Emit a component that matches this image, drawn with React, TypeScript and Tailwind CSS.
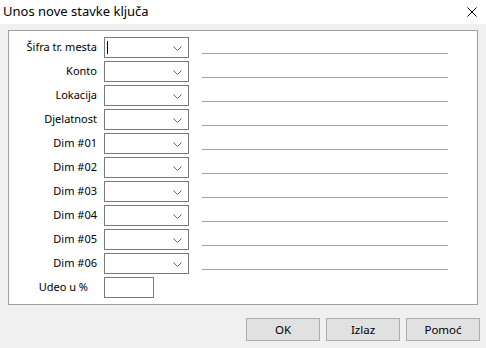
import React from 'react';

const rows = ['Šifra tr. mesta', 'Konto', 'Lokacija', 'Djelatnost', 'Dim #01', 'Dim #02', 'Dim #03', 'Dim #04', 'Dim #05', 'Dim #06'];

function Chevron() {
  return (
    <svg width="9" height="5" viewBox="0 0 9 5" fill="none" className="absolute right-[6px] top-[8px]">
      <path d="M0.5 0.5L4.5 4.5L8.5 0.5" stroke="#606060" strokeWidth="1" />
    </svg>
  );
}

export default function App() {
  return (
    <div className="w-[486px] h-[348px] bg-[#f0f0f0] flex flex-col text-[11px] text-black" style={{ fontFamily: '"Noto Sans", "Liberation Sans", sans-serif' }}>
      {/* Title bar */}
      <div className="h-[24px] bg-white flex items-center justify-between pl-[3px] pr-[9px] shrink-0">
        <span className="text-[13px]">Unos nove stavke ključa</span>
        <svg width="10" height="10" viewBox="0 0 10 10" fill="none">
          <path d="M0.5 0.5L9.5 9.5M9.5 0.5L0.5 9.5" stroke="#000" strokeWidth="1" />
        </svg>
      </div>

      {/* Panel */}
      <div className="mt-[6px] mx-[8px] h-[275px] bg-white border border-[#a0a0a0] flex flex-col gap-[3px] pt-[6px]">
        {rows.map((label, i) => (
          <div key={label} className="flex h-[21px] items-start">
            <div className="w-[88px] h-[21px] flex items-center justify-end">{label}</div>
            <div className="relative ml-[7px] w-[85px] h-[21px] border border-[#7a7a7a] bg-white">
              {i === 0 && <div className="absolute left-[2px] top-[3px] w-px h-[13px] bg-black" />}
              <Chevron />
            </div>
            <div className="ml-[13px] mt-[16px] w-[246px] h-px bg-[#a0a0a0]" />
          </div>
        ))}
        <div className="flex h-[21px] items-start">
          <div className="w-[79px] h-[21px] flex items-center justify-end">Udeo u %</div>
          <div className="ml-[16px] w-[50px] h-[21px] border border-[#7a7a7a] bg-white" />
        </div>
      </div>

      {/* Buttons */}
      <div className="flex justify-end gap-[6px] mt-[13px] mr-[6px]">
        {['OK', 'Izlaz', 'Pomoć'].map((b) => (
          <button key={b} className="w-[74px] h-[23px] bg-[#e1e1e1] border border-[#adadad] flex items-center justify-center text-[11.5px]">
            {b}
          </button>
        ))}
      </div>
    </div>
  );
}
